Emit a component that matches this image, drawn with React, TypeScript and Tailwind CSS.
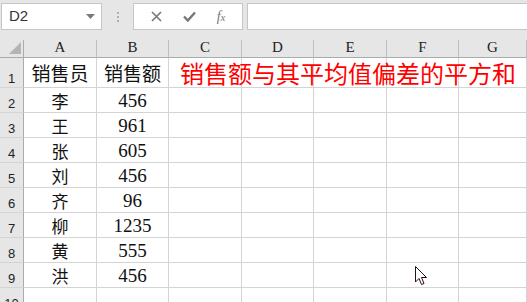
import { Fragment } from "react";

const cols = ["A", "B", "C", "D", "E", "F", "G"];
const data: [string, string][] = [
  ["李", "456"],
  ["王", "961"],
  ["张", "605"],
  ["刘", "456"],
  ["齐", "96"],
  ["柳", "1235"],
  ["黄", "555"],
  ["洪", "456"],
];

const cjkFont = { fontFamily: '"Noto Sans CJK SC", sans-serif' };
const numFont = { fontFamily: '"Liberation Serif", serif' };

function RowNum({ n, h }: { n: number; h: string }) {
  return (
    <div
      className={`${h} flex items-end justify-center pb-[2px] bg-[#e6e6e6] border-r border-b border-r-[#ababab] border-b-[#d4d4d4] text-[13px] leading-none text-[#222]`}
      style={{ fontFamily: '"Liberation Sans", sans-serif' }}
    >
      {n}
    </div>
  );
}

function Cell({ h, children, num }: { h: string; children?: React.ReactNode; num?: boolean }) {
  return (
    <div
      className={`${h} flex items-center justify-center border-r border-b border-[#d4d4d4] leading-none text-[#111] whitespace-nowrap ${
        num ? "text-[19px]" : "text-[17px]"
      }`}
      style={num ? numFont : cjkFont}
    >
      {children}
    </div>
  );
}

export default function App() {
  return (
    <div className="w-[527px] h-[302px] overflow-hidden bg-white relative">
      {/* 编辑栏 */}
      <div className="h-[40px] bg-[#e6e6e6] pt-[3px] flex items-start">
        <div className="ml-[1px] w-[101px] h-[27px] bg-white border border-[#c6c6c6] flex items-center justify-between pl-[7px] pr-[6px]">
          <span className="text-[15px] text-[#333]" style={{ fontFamily: '"Liberation Sans", sans-serif' }}>
            D2
          </span>
          <svg width="9" height="5" viewBox="0 0 9 5">
            <path d="M0 0 H9 L4.5 5 Z" fill="#7a7a7a" />
          </svg>
        </div>
        <div className="w-[31px] h-[27px] flex flex-col items-center justify-center gap-[2px]">
          <span className="w-[2px] h-[2px] bg-[#b0b0b0]" />
          <span className="w-[2px] h-[2px] bg-[#b0b0b0]" />
          <span className="w-[2px] h-[2px] bg-[#b0b0b0]" />
        </div>
        <div className="w-[110px] h-[27px] bg-white border border-[#c6c6c6] flex items-center justify-around px-[6px]">
          <svg width="11" height="11" viewBox="0 0 11 11">
            <path d="M1 1 L10 10 M10 1 L1 10" stroke="#777" strokeWidth="1.6" />
          </svg>
          <svg width="13" height="11" viewBox="0 0 13 11">
            <path d="M1 5.5 L4.8 9.5 L12 1.5" stroke="#777" strokeWidth="2.4" fill="none" />
          </svg>
          <span
            className="text-[14px] italic text-[#777] leading-none"
            style={{ fontFamily: '"Liberation Serif", serif' }}
          >
            f<span className="text-[11px]">x</span>
          </span>
        </div>
        <div className="ml-[4px] flex-1 h-[27px] bg-white border border-r-0 border-[#c6c6c6]" />
      </div>

      {/* 表格 */}
      <div className="grid grid-cols-[24px_73px_72px_73px_72px_73px_72px_1fr]">
        <div className="h-[18px] bg-[#e6e6e6] border-r border-b border-[#ababab] relative">
          <svg className="absolute right-[2px] bottom-[3px]" width="12" height="12" viewBox="0 0 12 12">
            <path d="M12 0 V12 H0 Z" fill="#b4b4b4" />
          </svg>
        </div>
        {cols.map((c) => (
          <div
            key={c}
            className="h-[18px] bg-[#e6e6e6] border-r border-b border-r-[#c0c0c0] border-b-[#ababab] flex items-end justify-center pb-[2px] text-[15px] leading-none text-[#222]"
            style={{ fontFamily: '"Liberation Serif", serif' }}
          >
            {c}
          </div>
        ))}

        {/* 第1行 */}
        <RowNum n={1} h="h-[30px]" />
        <Cell h="h-[30px]">
          <span className="text-[19px]">销售员</span>
        </Cell>
        <Cell h="h-[30px]">
          <span className="text-[19px]">销售额</span>
        </Cell>
        <div className="h-[30px] border-r border-b border-[#d4d4d4] relative">
          <span
            className="absolute left-[11px] top-[2px] text-[24px] leading-[26px] text-[#ff0000] whitespace-nowrap z-10"
            style={cjkFont}
          >
            销售额与其平均值偏差的平方和
          </span>
        </div>
        {[0, 1, 2, 3].map((i) => (
          <div key={i} className="h-[30px] border-r border-b border-[#d4d4d4]" />
        ))}

        {data.map(([name, val], i) => (
          <Fragment key={i}>
            <RowNum n={i + 2} h="h-[25px]" />
            <Cell h="h-[25px]">{name}</Cell>
            <Cell h="h-[25px]" num>
              {val}
            </Cell>
            {[0, 1, 2, 3, 4].map((j) => (
              <div key={j} className="h-[25px] border-r border-b border-[#d4d4d4]" />
            ))}
          </Fragment>
        ))}

        <RowNum n={10} h="h-[25px]" />
        {[0, 1, 2, 3, 4, 5, 6].map((j) => (
          <div key={j} className="h-[25px] border-r border-b border-[#d4d4d4]" />
        ))}
      </div>

      {/* 鼠标指针 */}
      <svg className="absolute left-[415px] top-[266px]" width="14" height="21" viewBox="0 0 14 21">
        <path
          d="M0.5 0.5 L0.5 16 L4 12.5 L6.5 18.5 L9 17.5 L6.5 11.5 L11.5 11.5 Z"
          fill="#fff"
          stroke="#2a0e1a"
          strokeWidth="1"
          strokeLinejoin="miter"
        />
      </svg>
    </div>
  );
}
